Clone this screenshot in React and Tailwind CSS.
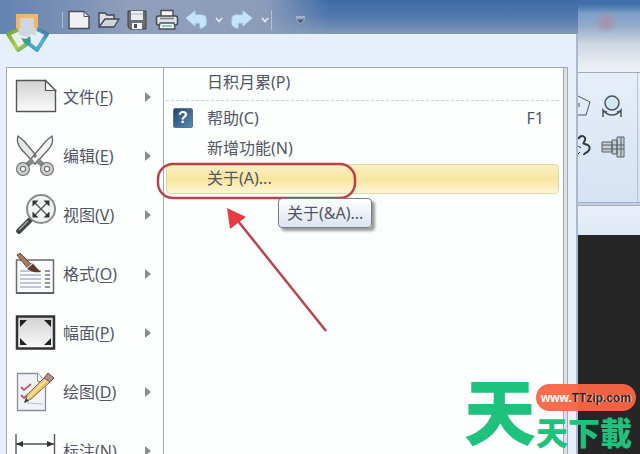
import React, { useState } from "react";

const NewIcon = () => (
  <svg width="24" height="22" viewBox="0 0 24 22">
    <path d="M2 2.500h15l5 5v12h-20z" fill="#eef0f2" stroke="#4b4f57" strokeWidth="1.500" />
    <path d="M17 2.500v5h5z" fill="#fff" stroke="#4b4f57" />
  </svg>
);

const OpenIcon = () => (
  <svg width="24" height="22" viewBox="0 0 24 22">
    <path d="M2 17V4h6l2 2h7v4" fill="#dde1e6" stroke="#3f4650" strokeWidth="1.400" />
    <path d="M2 18L8 10h14l-5 8z" fill="#cfd5dc" stroke="#3f4650" strokeWidth="1.400" strokeLinejoin="round" />
  </svg>
);

const SaveIcon = () => (
  <svg width="20" height="22" viewBox="0 0 20 22">
    <path d="M1 2h18v18H3l-2-2z" fill="#6a6f78" stroke="#3c4148" />
    <path d="M4 2h12v9H4z" fill="#e9edf0" />
    <path d="M4 5h12" stroke="#adb5bd" />
    <path d="M5 14h10v6H5z" fill="#f4f6f7" />
    <path d="M7 15h3v4H7z" fill="#4a4f57" />
  </svg>
);

const PrintIcon = () => (
  <svg width="24" height="22" viewBox="0 0 24 22">
    <path d="M6 8V1.500h12V8" fill="#f7f8f9" stroke="#4b4f57" strokeWidth="1.500" />
    <rect x="1.500" y="7" width="21" height="9" rx="2" fill="#dfe2e5" stroke="#42464d" strokeWidth="1.500" />
    <path d="M5 9.500h14" stroke="#777d85" strokeWidth="1.500" />
    <path d="M5 14h14l1 6H4z" fill="#f3fbf8" stroke="#4b4f57" strokeWidth="1.300" />
    <path d="M7 17h10" stroke="#8ccbb8" strokeWidth="2" />
  </svg>
);

const UndoIcon = ({ flip }) => (
  <svg width="22" height="20" viewBox="0 0 22 20" className={flip ? "-scale-x-100" : ""}>
    <path d="M1 8L10 1v4h7c3 0 4 2 4 4v6l-4 3h-2v-5h-5v3z" fill="#c6e4f9" stroke="#b4d8f2" strokeLinejoin="round" />
  </svg>
);

const CaretIcon = () => (
  <svg width="8" height="6" viewBox="0 0 8 6">
    <path d="M1 1l3 3.500L7 1" fill="none" stroke="#e3ebf3" strokeWidth="1.600" />
  </svg>
);

const LogoIcon = () => (
  <svg width="46" height="46" viewBox="0 0 46 46">
    <defs>
      <linearGradient id="logoGreen" x1="0" y1="0" x2="1" y2="1">
        <stop offset="0" stopColor="#6aa33f" />
        <stop offset="0.6" stopColor="#b5cf4c" />
        <stop offset="1" stopColor="#3e8f8c" />
      </linearGradient>
      <linearGradient id="logoBlue" x1="0" y1="1" x2="1" y2="0">
        <stop offset="0" stopColor="#3d9bb5" />
        <stop offset="0.6" stopColor="#58aedd" />
        <stop offset="1" stopColor="#3c6f9c" />
      </linearGradient>
    </defs>
    <path d="M14 22V4h18v18" fill="#d3d4d6" stroke="#efb66c" strokeWidth="4" />
    <path d="M14 18L4 22l10 16 13-9" fill="#e8f1e8" stroke="url(#logoGreen)" strokeWidth="4" strokeLinejoin="round" />
    <path d="M33 17l10 5-10 16-13-10" fill="#e3eff7" stroke="url(#logoBlue)" strokeWidth="4" strokeLinejoin="round" />
    <path d="M19 8h8v8h5v8l-5-2-4 3-8-2v-7h4z" fill="#ced7e1" />
    <path d="M17 26l5 1 4-3 1 6-5 3z" fill="#3a9b95" />
  </svg>
);

const FileIcon = () => (
  <svg width="42" height="42" viewBox="0 0 42 42">
    <defs>
      <linearGradient id="paper" x1="0" y1="0" x2="0" y2="1">
        <stop offset="0" stopColor="#d2d2d2" />
        <stop offset="1" stopColor="#fafafa" />
      </linearGradient>
    </defs>
    <path d="M1.500 4.500h29l10 10v21h-39z" fill="url(#paper)" stroke="#555" strokeWidth="1.400" strokeLinejoin="round" />
    <path d="M30.500 4.500v10h10z" fill="#fff" stroke="#555" strokeWidth="1.200" />
  </svg>
);

const ScissorsIcon = () => (
  <svg width="42" height="42" viewBox="0 0 42 42">
    <g stroke="#666" strokeWidth="1.300" strokeLinejoin="round">
      <path d="M3 1c-2 6 1 11 5 15l12 13 5-4L9 6z" fill="#e6e6e6" />
      <path d="M37 1c2 6-1 11-5 15L20 29l-5-4L31 6z" fill="#f4f4f4" />
    </g>
    <path d="M18 25l-6 5M22 25l6 5" stroke="#888" strokeWidth="5" />
    <circle cx="8" cy="34" r="4.500" fill="#fff" stroke="#666" strokeWidth="5" />
    <circle cx="8" cy="34" r="4.500" fill="none" stroke="#ccc" strokeWidth="3" />
    <circle cx="32" cy="34" r="4.500" fill="#fff" stroke="#666" strokeWidth="5" />
    <circle cx="32" cy="34" r="4.500" fill="none" stroke="#ccc" strokeWidth="3" />
    <circle cx="20" cy="21" r="1.800" fill="#777" />
  </svg>
);

const ViewIcon = () => (
  <svg width="42" height="42" viewBox="0 0 42 42">
    <path d="M15 26L4 37" stroke="#444" strokeWidth="5.500" strokeLinecap="round" />
    <path d="M13 27L4 36" stroke="#aaa" strokeWidth="1.500" />
    <circle cx="26" cy="15" r="14" fill="#f1f4f3" stroke="#888c8c" strokeWidth="2" />
    <path d="M19 8l14 14M33 8L19 22" stroke="#555" strokeWidth="1.400" />
    <path d="M17.500 6.500h6l-6 6zM34.500 6.500v6l-6-6zM17.500 23.500v-6l6 6zM34.500 23.500h-6l6-6z" fill="#333" />
  </svg>
);

const FormatIcon = () => (
  <svg width="42" height="42" viewBox="0 0 42 42">
    <rect x="1.500" y="7" width="37" height="33" fill="#fbfbfd" stroke="#666a72" strokeWidth="1.500" />
    <path d="M1 40h38" stroke="#5b5f66" strokeWidth="2" />
    <path d="M5 18h21M5 22h21M5 26h21M5 30h21M5 34h21" stroke="#a9b2cf" strokeWidth="1.300" />
    <path d="M30 18h5M30 22h5M30 26h5M30 30h5M30 34h5" stroke="#6f7378" strokeWidth="1.300" />
    <path d="M2 2l3-2 13 13-4 4z" fill="#a77a60" stroke="#6b4a39" />
    <path d="M12 13l5-3c3 2 5 6 9 9-6 1-12 0-14-6z" fill="#5d3c2a" />
    <path d="M12 15l6-5" stroke="#d9cfc6" strokeWidth="1.500" />
  </svg>
);

const SheetIcon = () => (
  <svg width="42" height="42" viewBox="0 0 42 42">
    <rect x="2" y="4.500" width="37" height="32" fill="url(#paper)" stroke="#333" strokeWidth="2.500" />
    <path d="M5 8h7l-7 7zM36 8v7l-7-7zM5 33v-7l7 7zM36 33h-7l7-7z" fill="#222" />
  </svg>
);

const DrawIcon = () => (
  <svg width="42" height="42" viewBox="0 0 42 42">
    <path d="M2.500 2.500h20l8 8v29h-28z" fill="#f2f3f7" stroke="#8a8e98" strokeWidth="1.300" />
    <path d="M22.500 2.500v8h8" fill="#fff" stroke="#8a8e98" />
    <path d="M6 16l3 3 7-6M6 24l3 3 7-6" fill="none" stroke="#b7596f" strokeWidth="1.800" />
    <path d="M12 32l16 1" stroke="#b9bdc6" />
    <path d="M10 31l2-7L31 5l5 5-20 18z" fill="#ecc86c" stroke="#80694a" />
    <path d="M12 28L32 8" stroke="#fbe9a6" strokeWidth="1.500" />
    <path d="M29 7l4-5 6 5-4 4z" fill="#b98c86" stroke="#6e5350" />
    <path d="M9 32l2-5 3 3z" fill="#444" />
  </svg>
);

const DimensionIcon = () => (
  <svg width="42" height="42" viewBox="0 0 42 42">
    <path d="M1 4v38M39.500 4v38M1 14h38" stroke="#555" strokeWidth="1.400" />
    <path d="M1 14l7-3v6zM39 14l-7-3v6z" fill="#333" />
  </svg>
);

const HelpIcon = () => (
  <span className="flex size-5 items-center justify-center rounded-xs border border-[#5b7486] bg-linear-to-br from-[#2b4669] to-[#4d8db9] font-['Liberation_Sans'] text-base leading-none font-bold text-white">
    ?
  </span>
);

const menuItems = [
  { label: "文件", accessKey: "F", Icon: FileIcon },
  { label: "编辑", accessKey: "E", Icon: ScissorsIcon },
  { label: "视图", accessKey: "V", Icon: ViewIcon },
  { label: "格式", accessKey: "O", Icon: FormatIcon },
  { label: "幅面", accessKey: "P", Icon: SheetIcon },
  { label: "绘图", accessKey: "D", Icon: DrawIcon },
  { label: "标注", accessKey: "N", Icon: DimensionIcon },
];

const helpItems = [
  { id: "tip", label: "日积月累(P)", separator: true },
  { id: "help", label: "帮助(C)", shortcut: "F1", Icon: HelpIcon },
  { id: "new", label: "新增功能(N)" },
  { id: "about", label: "关于(A)..." },
];

const TitleBar = () => (
  <header className="flex h-[34px] shrink-0 items-center bg-linear-to-b from-[#3f6ba6] via-[#5278ac] to-[#8199b6]">
    <div className="flex h-full items-center bg-[linear-gradient(to_right,#6482b0,#8f9fbb_40%,#8c9dba_80%,transparent)] pt-1.5 pl-[62px]">
      <span className="h-4 w-px bg-[#a9b8cd]" />
      <div className="flex items-center gap-1.5 pr-0.5 pl-1">
        <button aria-label="新建"><NewIcon /></button>
        <button aria-label="打开"><OpenIcon /></button>
        <button aria-label="保存"><SaveIcon /></button>
        <button aria-label="打印" className="ml-0.5"><PrintIcon /></button>
        <button aria-label="撤销"><UndoIcon /></button>
        <button aria-label="撤销列表" className="ml-0.5"><CaretIcon /></button>
        <button aria-label="重做" className="ml-0.5"><UndoIcon flip /></button>
        <button aria-label="重做列表" className="ml-0.5"><CaretIcon /></button>
      </div>
      <span className="h-5 w-px bg-[#b5c0d0]" />
      <button aria-label="自定义" className="px-6">
        <svg width="9" height="8" viewBox="0 0 9 8">
          <path d="M0 1h9" stroke="#d5dfe9" />
          <path d="M0 3h9L4.500 8z" fill="#4d5c70" stroke="#c3d0de" strokeWidth="0.600" />
        </svg>
      </button>
    </div>
  </header>
);

const Ribbon = () => (
  <aside className="-mt-[34px] flex w-[62px] shrink-0 flex-col">
    <div className="h-[72px] bg-[radial-gradient(circle_at_28px_22px,#a88fa9_1px,transparent_12px),linear-gradient(to_bottom,#3f6ea8_4px,#7fa0c8_14px,#93abc8_26px,#cfd7e2_44px,#eceff5_68px)]" />
    <div className="flex h-[130px] border-t border-[#9eabbc] bg-linear-to-b from-[#e7eef9] to-[#d5e3f3]">
      <div className="flex flex-1 flex-col justify-start gap-2 pt-[18px]">
        <svg width="59" height="32" viewBox="0 0 59 32" fill="none" stroke="#4a545f">
          <path d="M0 5l12 6-4 13H0" />
          <path d="M1 12v4" />
          <circle cx="34" cy="12" r="7" fill="#cfe9f0" strokeWidth="1.500" />
          <path d="M25 26v-7c3 4 6 5 9 5s6-1 9-5v7M25 20l4 1M43 20l-4 1" strokeWidth="1.500" />
        </svg>
        <svg width="59" height="32" viewBox="0 0 59 32" fill="none" stroke="#303840">
          <path d="M0 8c3-5 8-3 7 1-1 3-3 3 0 4s6 2 4 6-5 2-5 5" strokeWidth="2" />
          <path d="M0 15l3 2M0 23l2-2" />
          <path d="M24 11h10v10H24zM34 9h5v14h-5zM39 6h7v20h-7z" fill="#c5cdd2" stroke="#59636b" />
          <path d="M24 14h22M24 18h22M43 6v20" stroke="#59636b" />
        </svg>
      </div>
      <span className="w-px bg-[#b5c3d4]" />
      <span className="w-0.5" />
    </div>
    <div className="h-1 border-y border-[#a3afc0] bg-[#c6cfdf]" />
    <div className="h-[29px] bg-linear-to-b from-[#eaf0fa] to-[#dfe8f5]" />
    <div className="flex-1 bg-[#262626]" />
  </aside>
);

const Annotation = () => (
  <svg className="pointer-events-none absolute top-0 left-0 z-20" width="400" height="350" viewBox="0 0 400 350">
    <rect x="158" y="164" width="197" height="34" rx="15" fill="none" stroke="#bd4247" strokeWidth="2.500" />
    <path d="M238 221L326 331" stroke="#b94451" strokeWidth="2.500" />
    <path d="M227 208l19 9-16 12z" fill="#e83b44" />
  </svg>
);

const Watermark = () => (
  <div className="absolute right-1 bottom-0 z-20 flex items-end font-['Noto_Sans_CJK_SC',sans-serif] font-black text-[#1ec27c]">
    <span className="pb-1.5 text-[72px] leading-[80px]">天</span>
    <div className="flex flex-col">
      <a
        href="#ttzip"
        className="flex h-[27px] w-[100px] items-center justify-center rounded-full bg-[#f96545]/95 font-['Liberation_Sans'] text-xs font-bold text-white"
      >
        www.<span className="text-[#33201c] [text-shadow:1px_0_0_#ffd9cc]">TTzip.com</span>
      </a>
      <span className="pb-[3px] text-[32px] leading-10">天下載</span>
    </div>
  </div>
);

const App = () => {
  const [active, setActive] = useState("about");

  return (
    <div className="relative flex h-screen flex-col overflow-hidden bg-[#dfe9f6] font-['Noto_Sans','Noto_Sans_CJK_SC',sans-serif] text-base text-[#525660]">
      <TitleBar />

      <div className="flex min-h-0 flex-1">
        {/* Application menu */}
        <main className="z-10 flex min-w-0 flex-1 flex-col border-r-2 border-[#a9b8cd] bg-[#e7effa] pt-[33px] pr-2 pl-1.5">
          <div className="flex min-h-0 flex-1 border-x border-t border-[#a1a9b4] bg-[#fdfefe]">
            <nav className="w-[157px] shrink-0 overflow-hidden border-r border-[#a4a9af]">
              {menuItems.map(({ label, accessKey, Icon }) => (
                <button key={accessKey} className="flex h-[59px] w-full items-center pr-3 pb-0.5 pl-2 text-left">
                  <span className="w-12"><Icon /></span>
                  <span className="flex-1 whitespace-nowrap">
                    {label}(<span className="underline underline-offset-2">{accessKey}</span>)
                  </span>
                  <svg width="6" height="10" viewBox="0 0 6 10">
                    <path d="M0 0l6 5-6 5z" fill="#8b8b8b" />
                  </svg>
                </button>
              ))}
            </nav>

            <div className="flex-1 pr-1 pl-0.5">
              {helpItems.map(({ id, label, shortcut, separator, Icon }) => (
                <React.Fragment key={id}>
                  <button
                    onClick={() => setActive(id)}
                    className={`flex h-[30px] w-full items-center rounded-sm border pr-3.5 pb-0.5 pl-1.5 text-left ${
                      active === id
                        ? "border-[#e0d9a6] bg-linear-to-b from-[#fbf0c4] via-[#f8e5a0] to-[#fdf6d6]"
                        : "border-transparent"
                    }`}
                  >
                    <span className="w-[34px]">{Icon && <Icon />}</span>
                    <span className="flex-1">{label}</span>
                    {shortcut && <span>{shortcut}</span>}
                  </button>
                  {separator && <hr className="mt-0.5 mb-[3px] border-dashed border-[#cfcfcf]" />}
                </React.Fragment>
              ))}
            </div>
            <span className="w-1 border-l border-[#a5a9ac] bg-[#dcdfe3]" />
          </div>
        </main>

        <Ribbon />
      </div>

      <div className="absolute top-3 left-1 z-20">
        <LogoIcon />
      </div>

      <Annotation />
      <div
        role="tooltip"
        className="absolute top-[198px] left-[278px] z-20 rounded-sm border border-[#777b84] bg-linear-to-b from-white to-[#dde3f1] px-2 py-0.5 shadow-[3px_3px_3px_rgba(0,0,0,0.4)]"
      >
        关于(&amp;A)...
      </div>
      <Watermark />
    </div>
  );
};

export default App;
